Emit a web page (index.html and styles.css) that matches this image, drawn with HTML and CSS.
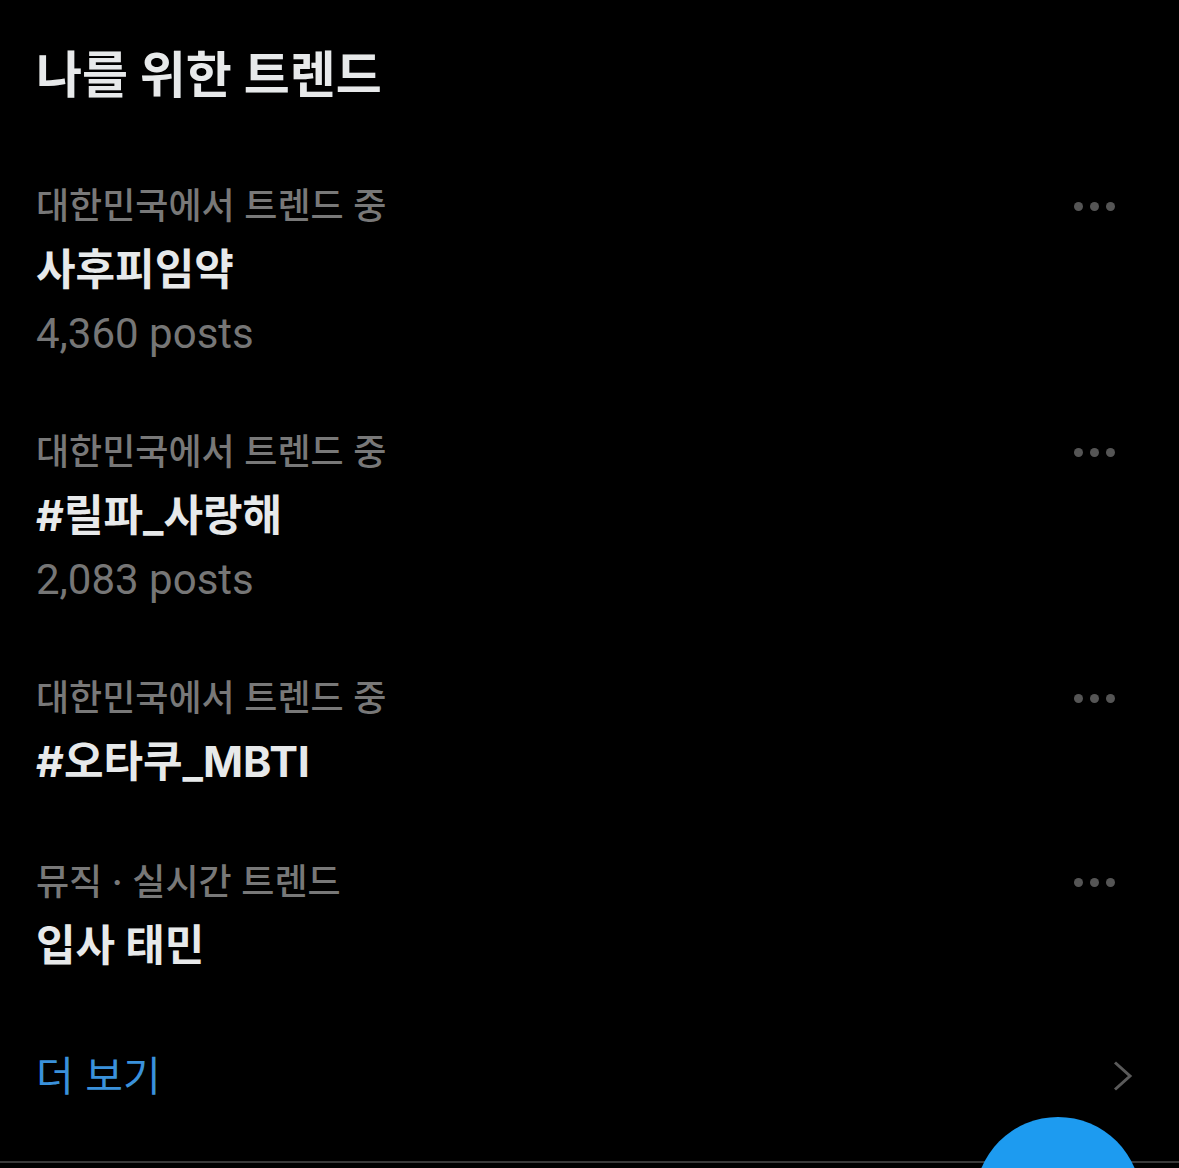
FILE: index.html
```
<!DOCTYPE html>
<html lang="ko">
<head>
<meta charset="utf-8">
<link rel="stylesheet" href="styles.css">
</head>
<body>
<div class="page">
  <h1 class="title">나를 위한 트렌드</h1>
  <div class="trends">
    <div class="trend">
      <div class="info">
        <div class="meta">대한민국에서 트렌드 중</div>
        <div class="name">사후피임약</div>
        <div class="count">4,360 posts</div>
      </div>
      <div class="more-dots"><span></span><span></span><span></span></div>
    </div>
    <div class="trend">
      <div class="info">
        <div class="meta">대한민국에서 트렌드 중</div>
        <div class="name">#릴파_사랑해</div>
        <div class="count">2,083 posts</div>
      </div>
      <div class="more-dots"><span></span><span></span><span></span></div>
    </div>
    <div class="trend">
      <div class="info">
        <div class="meta">대한민국에서 트렌드 중</div>
        <div class="name">#오타쿠_MBTI</div>
      </div>
      <div class="more-dots"><span></span><span></span><span></span></div>
    </div>
    <div class="trend">
      <div class="info">
        <div class="meta">뮤직 · 실시간 트렌드</div>
        <div class="name">입사 태민</div>
      </div>
      <div class="more-dots"><span></span><span></span><span></span></div>
    </div>
  </div>
  <div class="show-more">
    <span class="show-more-text">더 보기</span>
    <svg class="chevron" width="20" height="30" viewBox="0 0 20 30"><path d="M2 1.5 L17 15 L2 28.5" fill="none" stroke="#5a5a5a" stroke-width="3"/></svg>
  </div>
  <div class="bottom-bar"></div>
  <div class="fab"></div>
</div>
</body>
</html>
```
FILE: styles.css
```
* { box-sizing: border-box; }
html, body { margin: 0; padding: 0; background: #000; }
body {
  font-family: Inter, "Noto Sans CJK KR", sans-serif;
  color: #e7e9ea;
  width: 1179px;
  height: 1168px;
  overflow: hidden;
}
.page {
  position: relative;
  height: 1168px;
  overflow: hidden;
  display: flex;
  flex-direction: column;
}
.title {
  margin: 0;
  padding: 39px 0 0 36px;
  font-size: 50px;
  line-height: 72px;
  font-weight: 700;
}
.trends {
  display: flex;
  flex-direction: column;
  padding-top: 66px;
}
.trend {
  display: flex;
  justify-content: space-between;
  align-items: flex-start;
  padding: 0 64px 0 36px;
  margin-bottom: 58px;
}
.info { display: flex; flex-direction: column; }
.meta {
  font-size: 36px;
  line-height: 58px;
  color: #787878;
  font-weight: 500;
}
.name {
  font-size: 43px;
  line-height: 68px;
  font-weight: 700;
}
.count {
  font-family: Roboto, "Noto Sans CJK KR", sans-serif;
  font-size: 42px;
  line-height: 62px;
  color: #767676;
}
.more-dots {
  display: flex;
  gap: 7px;
  padding-top: 25px;
}
.more-dots span {
  width: 9px;
  height: 9px;
  border-radius: 50%;
  background: #555;
}
.show-more {
  display: flex;
  justify-content: space-between;
  align-items: center;
  padding: 8px 46px 0 36px;
}
.show-more-text {
  font-size: 41px;
  line-height: 62px;
  color: #3a91db;
}
.chevron { display: block; }
.bottom-bar {
  margin-top: auto;
  height: 7px;
  border-top: 2px solid #3a3a3a;
}
.fab {
  position: absolute;
  left: 975px;
  top: 1117px;
  width: 166px;
  height: 166px;
  border-radius: 50%;
  background: #1d9bf0;
}
```
